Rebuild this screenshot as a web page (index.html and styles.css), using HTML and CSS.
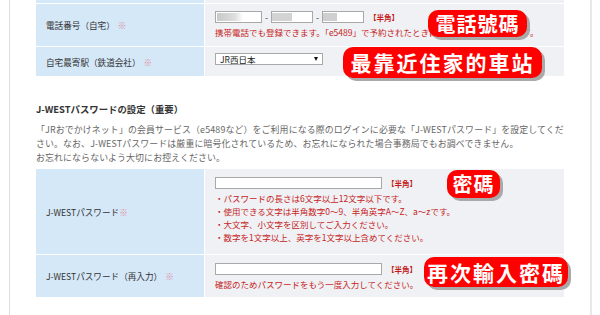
FILE: index.html
```html
<!DOCTYPE html>
<html lang="ja">
<head>
<meta charset="utf-8">
<link rel="stylesheet" href="styles.css">
</head>
<body>
<div class="page">
  <div class="content">
    <div class="form-table top-table">
      <div class="cell label stub"></div><div class="cell value stub"></div>
      <div class="cell label row-phone">電話番号（自宅）<span class="req">※</span></div>
      <div class="cell value row-phone">
        <div class="line">
          <span class="input tel1"><span class="blur b1"></span></span><span class="dash">-</span>
          <span class="input tel2"><span class="blur b2"></span></span><span class="dash">-</span>
          <span class="input tel3"><span class="blur b3"></span></span>
          <span class="hankaku">【半角】</span>
        </div>
        <p class="note">携帯電話でも登録できます。「e5489」で予約されたときにお知らせが届く番号です。</p>
      </div>
      <div class="cell label row-station">自宅最寄駅（鉄道会社）<span class="req">※</span></div>
      <div class="cell value row-station">
        <div class="select"><span>JR西日本</span><span class="arrow"></span></div>
      </div>
    </div>

    <h2 class="section-title">J-WESTパスワードの設定（重要）</h2>
    <p class="desc">「JRおでかけネット」の会員サービス（e5489など）をご利用になる際のログインに必要な「J-WESTパスワード」を設定してくだ<br>さい。なお、J-WESTパスワードは厳重に暗号化されているため、お忘れになられた場合事務局でもお調べできません。<br>お忘れにならないよう大切にお控えください。</p>

    <div class="form-table">
      <div class="cell label row-pw">J-WESTパスワード<span class="req tight">※</span></div>
      <div class="cell value row-pw">
        <div class="line">
          <span class="input pw"></span>
          <span class="hankaku">【半角】</span>
        </div>
        <ul class="rules">
          <li>・パスワードの長さは6文字以上12文字以下です。</li>
          <li>・使用できる文字は半角数字0～9、半角英字A～Z、a～zです。</li>
          <li>・大文字、小文字を区別してご入力ください。</li>
          <li>・数字を1文字以上、英字を1文字以上含めてください。</li>
        </ul>
      </div>
      <div class="cell label row-pw2">J-WESTパスワード（再入力） <span class="req">※</span></div>
      <div class="cell value row-pw2">
        <div class="line">
          <span class="input pw"></span>
          <span class="hankaku">【半角】</span>
        </div>
        <p class="note">確認のためパスワードをもう一度入力してください。</p>
      </div>
    </div>
  </div>

  <span class="tag tag-phone">電話號碼</span>
  <span class="tag tag-station">最靠近住家的車站</span>
  <span class="tag tag-pw">密碼</span>
  <span class="tag tag-pw2">再次輸入密碼</span>
</div>
</body>
</html>
```

FILE: styles.css
```css
* { box-sizing: border-box; }
html, body { margin: 0; padding: 0; background: #fff; }
body {
  font-family: "Noto Sans CJK JP", "Noto Sans", sans-serif;
  color: #333;
  width: 600px;
  height: 315px;
  overflow: hidden;
}
.page {
  position: relative;
  margin-left: 9px;
  width: 583px;
  height: 315px;
  border-left: 1px solid #dcdcdc;
  border-right: 2px solid #e8e8ea;
}
.content {
  padding-left: 26px;
  width: 553px;
}
.form-table {
  display: grid;
  grid-template-columns: 168px 359px;
  column-gap: 1px;
  row-gap: 1px;
  background: #fff;
}
.cell { display: flex; }
.label {
  background: #d5e8f8;
  align-items: center;
  padding-left: 10px;
  font-size: 8.6px;
  line-height: 12px;
  color: #333;
}
.value {
  background: #eff1f4;
  flex-direction: column;
  padding-left: 10px;
}
.req { color: #e3889a; margin-left: 3px; }
.req.tight { margin-left: 0; }
.stub { height: 3px; }
.row-phone { height: 42px; }
.value.row-phone { padding-top: 7px; }
.row-station { height: 29px; }
.value.row-station { padding-top: 6px; }
.row-pw { height: 85px; }
.value.row-pw { padding-top: 8px; }
.row-pw2 { height: 42px; }
.value.row-pw2 { padding-top: 8px; }

.line { display: flex; align-items: center; height: 12px; }
.input {
  display: inline-block;
  position: relative;
  height: 12px;
  background: #fff;
  border: 1px solid #a9a9a9;
  overflow: hidden;
}
.tel1 { width: 47px; }
.tel2 { width: 42px; }
.tel3 { width: 42px; }
.pw { width: 167px; }
.blur { display: block; position: absolute; top: 1px; height: 8px; }
.b1 { left: 1px; width: 26px; background: linear-gradient(90deg, #c9c9c9, #dedede 70%, #fff); }
.b2 { left: 0; width: 20px; background: #d3d3d3; }
.b3 { left: 0; width: 14px; background: #cfcfcf; }
.dash { width: 9px; text-align: center; font-size: 9px; color: #444; }
.hankaku {
  margin-left: 5px;
  font-size: 7.5px;
  font-weight: bold;
  color: #c41a1a;
  white-space: nowrap;
}
.note {
  margin: 3px 0 0;
  font-size: 8.5px;
  line-height: 12px;
  color: #c72424;
  white-space: nowrap;
}
.rules {
  list-style: none;
  margin: 3px 0 0;
  padding: 0;
  font-size: 8.5px;
  line-height: 13px;
  color: #c72424;
  white-space: nowrap;
}
.select {
  width: 108px;
  height: 12px;
  background: #fff;
  border: 1px solid #a9a9a9;
  display: flex;
  align-items: center;
  justify-content: space-between;
  padding: 0 4px;
  font-size: 8.5px;
  color: #222;
}
.arrow {
  width: 0; height: 0;
  border-left: 2.5px solid transparent;
  border-right: 2.5px solid transparent;
  border-top: 4px solid #111;
}
.section-title {
  margin: 26px 0 0;
  font-size: 9.4px;
  line-height: 14px;
  font-weight: bold;
  color: #333;
}
.desc {
  margin: 7px 0 4px;
  font-size: 8.9px;
  line-height: 14px;
  letter-spacing: 0.15px;
  color: #666;
  white-space: nowrap;
}

.tag {
  position: absolute;
  background: #f00;
  color: #fff;
  font-family: "Noto Sans CJK TC", "Noto Sans CJK JP", sans-serif;
  font-weight: 700;
  border-radius: 10px;
  box-shadow: 3px 3px 0 #a9a9a9;
  white-space: nowrap;
  text-align: center;
}
.tag-phone { left: 418px; top: 10px; width: 99px; height: 27px; font-size: 20px; line-height: 27px; letter-spacing: 1px; }
.tag-station { left: 333px; top: 47px; width: 199px; height: 31px; font-size: 21px; line-height: 31px; letter-spacing: 2px; }
.tag-pw { left: 437px; top: 170px; width: 53px; height: 28px; font-size: 20px; line-height: 28px; letter-spacing: 1px; }
.tag-pw2 { left: 414px; top: 257px; width: 144px; height: 30px; font-size: 21px; line-height: 30px; letter-spacing: 2px; }
```
